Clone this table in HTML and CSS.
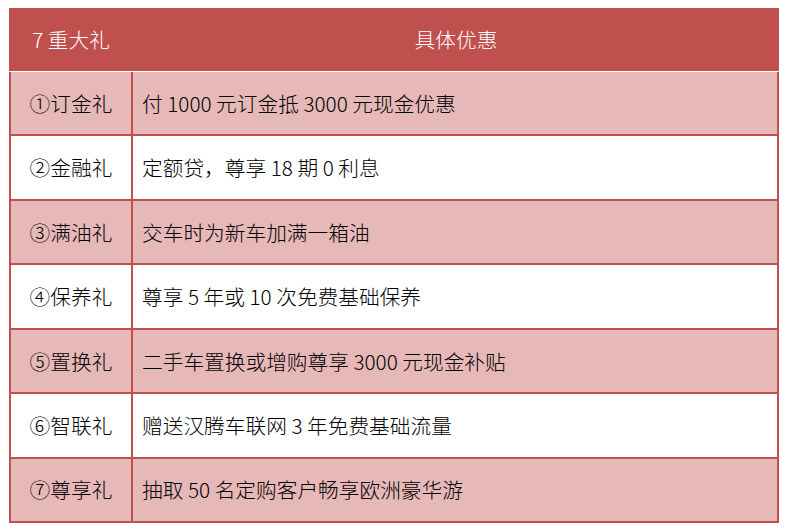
FILE: index.html
```html
<!DOCTYPE html>
<html lang="zh-CN">
<head>
<meta charset="utf-8">
<title>7 重大礼</title>
<link rel="stylesheet" href="styles.css">
</head>
<body>
<div class="tbl">
  <div class="cell head">7 重大礼</div>
  <div class="cell head">具体优惠</div>

  <div class="cell name pink">①订金礼</div>
  <div class="cell desc pink">付 1000 元订金抵 3000 元现金优惠</div>

  <div class="cell name">②金融礼</div>
  <div class="cell desc">定额贷，尊享 18 期 0 利息</div>

  <div class="cell name pink">③满油礼</div>
  <div class="cell desc pink">交车时为新车加满一箱油</div>

  <div class="cell name">④保养礼</div>
  <div class="cell desc">尊享 5 年或 10 次免费基础保养</div>

  <div class="cell name pink">⑤置换礼</div>
  <div class="cell desc pink">二手车置换或增购尊享 3000 元现金补贴</div>

  <div class="cell name">⑥智联礼</div>
  <div class="cell desc">赠送汉腾车联网 3 年免费基础流量</div>

  <div class="cell name pink">⑦尊享礼</div>
  <div class="cell desc pink">抽取 50 名定购客户畅享欧洲豪华游</div>
</div>
</body>
</html>
```
FILE: styles.css
```css
html, body {
  margin: 0;
  padding: 0;
  background: #ffffff;
}

body {
  padding: 8px 0 0 9px;
  font-family: "Noto Sans CJK SC", "Noto Sans", sans-serif;
  font-size: 20.7px;
  font-weight: 300;
  color: #000000;
}

.tbl {
  width: 770px;
  display: grid;
  grid-template-columns: 124px 646px;
  grid-template-rows: 64px repeat(7, 64.43px);
}

.cell {
  box-sizing: border-box;
  display: flex;
  align-items: center;
  white-space: nowrap;
  line-height: 1;
}

.head {
  background: #c0504d;
  color: #ffffff;
  justify-content: center;
  border-bottom: 1px solid #ffffff;
}

.name {
  justify-content: center;
  border-left: 2px solid #c0504d;
  border-right: 2px solid #c0504d;
  border-bottom: 2px solid #c0504d;
  background: #ffffff;
}

.desc {
  padding-left: 9px;
  border-right: 2px solid #c0504d;
  border-bottom: 2px solid #c0504d;
  background: #ffffff;
}

.pink {
  background: #e6b8b7;
}
```
